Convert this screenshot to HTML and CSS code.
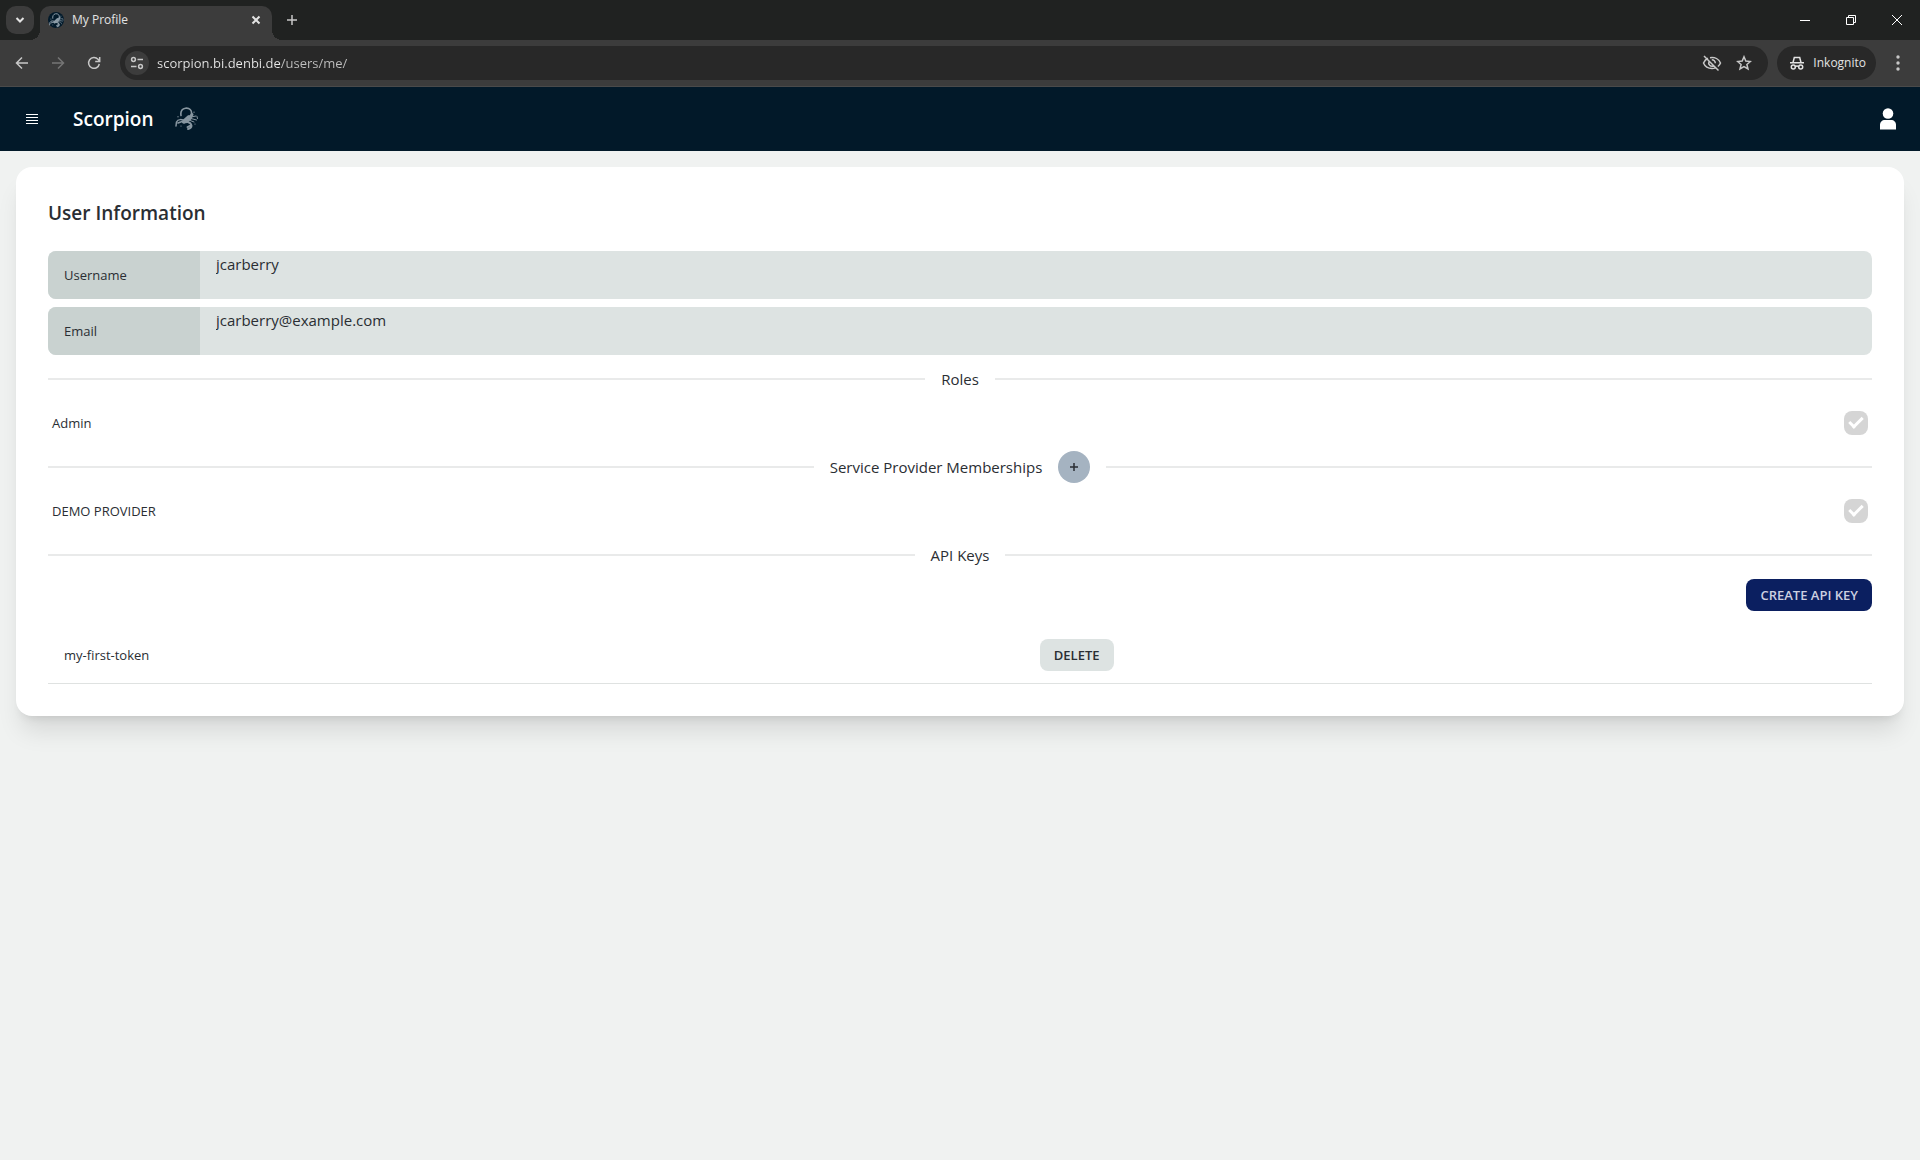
FILE: index.html
```html
<!DOCTYPE html>
<html lang="en">
<head>
    <meta charset="UTF-8">
    <meta name="viewport" content="width=device-width, initial-scale=1.0">
    <title>My Profile</title>
    <link rel="stylesheet" href="styles.css">
</head>
<body>
    <svg class="sprite" aria-hidden="true">
        <symbol id="scorpion" viewBox="0 0 24 24">
            <g fill="none" stroke="currentColor" stroke-linecap="round">
                <path d="M6 8.500C5.500 5.500 6.500 2 10.500 1.200c4-.6 6.500 2.300 6 5.800-.2 1.500-.8 2.600-1.500 3.500" stroke-width="1.600"/>
                <path d="M17 7.500l-2 4-3.500 3-3 .5" stroke-width="3"/>
                <path d="M14 10l-5 4.500" stroke-width="4"/>
                <path d="M10 14c-3-2-7-2-8.500 1L1 19M7 14.500l-4 1.500" stroke-width="1.500"/>
                <path d="M11 14.500c3 .5 5 2 5.500 4 .2 2-1.500 3-3.500 3.500M15.500 18.500l-3 1.500" stroke-width="1.900"/>
                <path d="M16 10l5-1M16 11.500l5.500 1.500M14 13l5 2M19 5v.5M22 9.500l.5 2M3 9.500v.5M6 19v.2M20 17v.2" stroke-width="1"/>
            </g>
        </symbol>
    </svg>

    <!-- Browser window -->
    <div class="tab-strip">
        <button class="tab-search" aria-label="Search tabs">
            <svg width="10" height="10" viewBox="0 0 10 10"><path d="M1.500 3L5 6.500 8.500 3"/></svg>
        </button>
        <div class="tab">
            <span class="favicon"><svg width="15" height="15"><use href="#scorpion"/></svg></span>
            <span class="tab-title">My Profile</span>
            <button class="plain" aria-label="Close tab">
                <svg width="10" height="10" viewBox="0 0 10 10"><path d="M1.500 1.500l7 7M8.500 1.500l-7 7"/></svg>
            </button>
        </div>
        <button class="plain new-tab" aria-label="New tab">
            <svg width="12" height="12" viewBox="0 0 12 12"><path d="M6 1v10M1 6h10"/></svg>
        </button>
        <div class="window-buttons">
            <button class="plain" aria-label="Minimize">
                <svg width="12" height="12" viewBox="0 0 12 12"><path d="M1 6.500h10"/></svg>
            </button>
            <button class="plain" aria-label="Restore">
                <svg width="12" height="12" viewBox="0 0 12 12"><path d="M1.500 3.500h7v7h-7zM3.500 3.500v-2h7v7h-2"/></svg>
            </button>
            <button class="plain" aria-label="Close">
                <svg width="12" height="12" viewBox="0 0 12 12"><path d="M1 1l10 10M11 1L1 11"/></svg>
            </button>
        </div>
    </div>

    <div class="toolbar">
        <div class="nav-buttons">
            <button class="plain" aria-label="Back">
                <svg width="14" height="14" viewBox="0 0 14 14"><path d="M7 1.500L1.500 7 7 12.500M2 7h11"/></svg>
            </button>
            <button class="plain" aria-label="Forward" disabled>
                <svg width="14" height="14" viewBox="0 0 14 14"><path d="M7 1.500L12.500 7 7 12.500M12 7H1"/></svg>
            </button>
            <button class="plain" aria-label="Reload">
                <svg width="14" height="14" viewBox="0 0 14 14"><path d="M12.300 8A5.400 5.400 0 1 1 11 3.300L12.500 5M12.700 1v4.500H8.200"/></svg>
            </button>
        </div>
        <div class="omnibox">
            <button class="site-info" aria-label="View site information">
                <svg width="14" height="14" viewBox="0 0 14 14"><circle cx="3.500" cy="3.500" r="1.900"/><circle cx="10.500" cy="10.500" r="1.900"/><path d="M7.500 3.500H13M1 10.500h5.500"/></svg>
            </button>
            <input class="url" type="text" aria-label="Address" value="scorpion.bi.denbi.de/users/me/">
            <button class="plain" aria-label="Third-party cookies blocked">
                <svg width="20" height="18" viewBox="0 0 20 18"><path d="M2 2l14.500 14.500M6 4.300C3.800 5.200 2.400 6.900 1.500 9c1.500 3.500 4.700 5.500 8.500 5.500 1.200 0 2.300-.2 3.300-.6M8 3.700C13 2.800 17 5.300 18.500 9c-.6 1.500-1.400 2.600-2.600 3.500M7 7.500A3.400 3.400 0 0 0 11.500 12M9.800 5.700A3.400 3.400 0 0 1 13.300 9.300"/></svg>
            </button>
            <button class="plain" aria-label="Bookmark this tab">
                <svg width="16" height="16" viewBox="0 0 16 16"><path d="M8 1.800l1.800 4.300 4.600.4-3.500 3 1.100 4.500L8 11.600 4 14l1.100-4.500-3.500-3 4.600-.4z"/></svg>
            </button>
        </div>
        <button class="incognito">
            <svg width="16" height="16" viewBox="0 0 16 16"><path d="M1 7.700h14M4 7.500L5.300 2.500h5.400L12 7.500M6 11.800c1-.8 3-.8 4 0"/><circle cx="4.300" cy="12" r="2"/><circle cx="11.700" cy="12" r="2"/></svg>
            Inkognito
        </button>
        <button class="plain" aria-label="Menu">
            <svg class="solid" width="4" height="16" viewBox="0 0 4 16"><circle cx="2" cy="2" r="1.700"/><circle cx="2" cy="8" r="1.700"/><circle cx="2" cy="14" r="1.700"/></svg>
        </button>
    </div>

    <!-- Page -->
    <header class="navbar">
        <button class="plain menu" aria-label="Open menu">
            <svg width="12" height="12" viewBox="0 0 12 12"><path d="M0 1.500h12M0 4.500h12M0 7.500h12M0 10.500h12"/></svg>
        </button>
        <a class="brand" href="/">Scorpion <svg width="24" height="24"><use href="#scorpion"/></svg></a>
        <button class="plain account" aria-label="Account">
            <svg class="solid" width="16" height="22" viewBox="0 0 16 22"><circle cx="8" cy="5.500" r="5.300"/><path d="M0 21.500V17c0-3 2-5 5-5h6c3 0 5 2 5 5v4.500z"/></svg>
        </button>
    </header>

    <main class="card">
        <h1>User Information</h1>

        <div class="field">
            <label for="username">Username</label>
            <input id="username" type="text" value="jcarberry" readonly>
        </div>
        <div class="field">
            <label for="email">Email</label>
            <input id="email" type="text" value="jcarberry@example.com" readonly>
        </div>

        <h2 class="divider">Roles</h2>
        <label class="check-row">
            Admin
            <input type="checkbox" checked disabled>
        </label>

        <h2 class="divider">
            Service Provider Memberships
            <button class="btn-circle" aria-label="Join service provider">
                <svg width="8" height="8" viewBox="0 0 8 8"><path d="M4 0v8M0 4h8"/></svg>
            </button>
        </h2>
        <label class="check-row">
            DEMO PROVIDER
            <input type="checkbox" checked disabled>
        </label>

        <h2 class="divider">API Keys</h2>
        <div class="actions">
            <button class="btn btn-primary">CREATE API KEY</button>
        </div>
        <table class="keys">
            <tr>
                <td class="key-name">my-first-token</td>
                <td><button class="btn">DELETE</button></td>
            </tr>
        </table>
    </main>
</body>
</html>
```
FILE: styles.css
```css
* {
    box-sizing: border-box;
}

body {
    margin: 0;
    min-height: 100vh;
    background: #f0f2f1;
    color: #2a2e33;
    font-family: "Segoe UI", "Open Sans", sans-serif;
    font-size: 13px;
    line-height: 20px;
}

button,
input {
    font: inherit;
    color: inherit;
}

svg {
    display: block;
    fill: none;
    stroke: currentColor;
    stroke-width: 1.5;
}

svg.solid {
    fill: currentColor;
    stroke: none;
}

.sprite {
    position: absolute;
    width: 0;
    height: 0;
}

.plain {
    display: flex;
    padding: 0;
    border: none;
    background: none;
}

/* Browser window */
.tab-strip {
    display: flex;
    align-items: center;
    height: 40px;
    padding-left: 6px;
    background: #202221;
    color: #e3e3e3;
    font-size: 12px;
}

.tab-search {
    display: grid;
    place-items: center;
    width: 28px;
    height: 28px;
    padding: 0;
    border: none;
    border-radius: 10px;
    background: #3c3c3c;
}

.tab-search svg,
.tab > button svg {
    stroke-width: 2;
}

.tab {
    position: relative;
    display: flex;
    align-items: center;
    align-self: flex-end;
    width: 232px;
    height: 34px;
    margin-left: 6px;
    padding: 0 11px 6px 8px;
    border-radius: 10px 10px 0 0;
    background: #3c3c3c;
}

/* Flared feet of the active tab */
.tab::before,
.tab::after {
    content: "";
    position: absolute;
    bottom: 0;
    width: 10px;
    height: 10px;
}

.tab::before {
    left: -10px;
    background: radial-gradient(circle at 0 0, transparent 10px, #3c3c3c 10px);
}

.tab::after {
    right: -10px;
    background: radial-gradient(circle at 100% 0, transparent 10px, #3c3c3c 10px);
}

.favicon {
    display: grid;
    place-items: center;
    width: 16px;
    height: 16px;
    margin-right: 8px;
    border-radius: 50%;
    background: #021a2b;
    color: #8b9ba7;
}

.tab-title {
    flex: 1;
}

.new-tab {
    margin-left: 14px;
    color: #c7c7c7;
}

.window-buttons {
    display: flex;
    gap: 34px;
    margin-left: auto;
    padding-right: 17px;
    color: #fff;
}

.window-buttons svg {
    stroke-width: 1;
}

.toolbar {
    display: flex;
    align-items: center;
    height: 47px;
    padding: 0 20px 1px 15px;
    border-bottom: 1px solid #4a4a4a;
    background: #3c3c3c;
    color: #c7c7c7;
}

.nav-buttons {
    display: flex;
    gap: 22px;
}

.nav-buttons button:disabled {
    color: #757575;
}

.omnibox {
    display: flex;
    flex: 1;
    align-items: center;
    gap: 14px;
    height: 34px;
    margin: 0 9px 0 19px;
    padding: 0 16px 0 5px;
    border-radius: 17px;
    background: #282828;
}

.site-info {
    display: grid;
    place-items: center;
    width: 24px;
    height: 24px;
    padding: 0;
    border: none;
    border-radius: 50%;
    background: #3c3c3c;
}

/* The host part is brighter than the path */
.url {
    flex: 1;
    margin-left: -6px;
    padding: 0;
    border: none;
    outline: none;
    background: linear-gradient(to right, #e8e8e8 124px, #c0c0c0 124px);
    -webkit-background-clip: text;
    background-clip: text;
    color: transparent;
}

.incognito {
    display: flex;
    align-items: center;
    gap: 8px;
    height: 34px;
    margin-right: 20px;
    padding: 0 10px 0 12px;
    border: none;
    border-radius: 17px;
    background: #282828;
    color: #e3e3e3;
    font-size: 12px;
}

/* Page */
.navbar {
    display: flex;
    align-items: center;
    height: 64px;
    padding: 0 24px 0 26px;
    background: #021929;
    color: #fff;
}

.menu svg {
    stroke-width: 1;
}

.brand {
    display: flex;
    align-items: center;
    gap: 22px;
    margin-left: 35px;
    color: #fff;
    font-size: 19px;
    font-weight: 600;
    line-height: 28px;
    text-decoration: none;
}

.brand svg {
    color: #8896a0;
}

.account {
    margin-left: auto;
}

.card {
    margin: 16px;
    padding: 32px;
    border-radius: 16px;
    background: #fff;
    box-shadow: 0 20px 25px -5px rgba(0, 0, 0, 0.1), 0 8px 10px -6px rgba(0, 0, 0, 0.1);
}

h1 {
    margin: 0 0 24px;
    font-size: 19px;
    font-weight: 600;
    line-height: 28px;
}

.field {
    display: flex;
    height: 48px;
    overflow: hidden;
    border-radius: 8px;
    background: #dde3e2;
}

.field + .field {
    margin-top: 8px;
}

.field label {
    display: flex;
    align-items: center;
    width: 152px;
    padding: 0 16px;
    background: #c9d2d0;
}

.field input {
    flex: 1;
    padding: 1px 16px 23px;
    border: none;
    outline: none;
    background: none;
    font-size: 15px;
}

.divider {
    display: flex;
    align-items: center;
    gap: 16px;
    height: 16px;
    margin: 16px 0;
    font-size: 15px;
    font-weight: 400;
}

.divider::before,
.divider::after {
    content: "";
    flex: 1;
    height: 2px;
    background: #e9eaea;
}

.btn-circle {
    display: grid;
    place-items: center;
    width: 32px;
    height: 32px;
    padding: 0;
    border: none;
    border-radius: 50%;
    background: #a5b3c1;
}

.check-row {
    display: flex;
    align-items: center;
    justify-content: space-between;
    padding: 8px 4px;
}

.check-row input {
    display: grid;
    place-items: center;
    width: 24px;
    height: 24px;
    margin: 0;
    border-radius: 8px;
    background: #d5d5d5;
    appearance: none;
}

.check-row input:checked::before {
    content: "";
    box-sizing: border-box;
    width: 14px;
    height: 8px;
    margin-bottom: 4px;
    border: solid #fff;
    border-width: 0 0 3px 3px;
    transform: rotate(-45deg);
}

.actions {
    display: flex;
    justify-content: flex-end;
    margin-bottom: 16px;
}

.btn {
    height: 32px;
    padding: 0 14px;
    border: none;
    border-radius: 8px;
    background: #dde3e2;
    font-weight: 600;
}

.btn-primary {
    background: #0b1f60;
    color: #cdd0e0;
}

.keys {
    width: 100%;
    border-collapse: collapse;
}

.keys td {
    padding: 12px 16px;
    border-bottom: 1px solid #dfe2e1;
}

.key-name {
    width: 53.5%;
}
```
